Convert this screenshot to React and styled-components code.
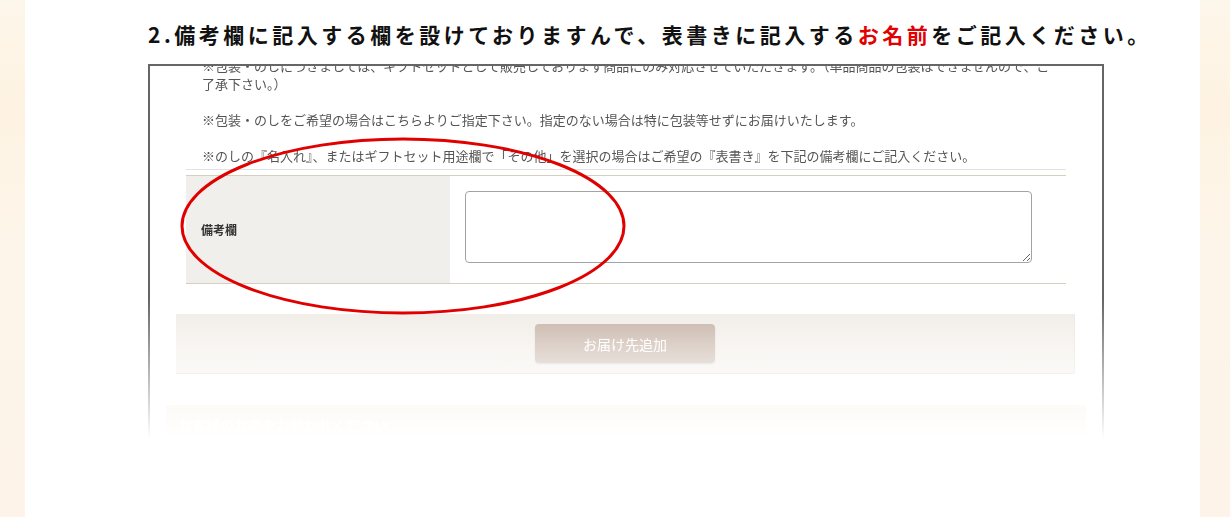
import React from "react"
import styled, { createGlobalStyle } from "styled-components"

const GlobalStyle = createGlobalStyle`
  html, body {
    margin: 0;
    padding: 0;
    background: #fff;
  }
  body {
    font-family: "Noto Sans CJK JP", "Noto Sans", sans-serif;
  }
`

const Page = styled.div`
  position: relative;
  display: flex;
  width: 1230px;
  height: 517px;
  overflow: hidden;
`

const Side = styled.div`
  width: ${p => p.$w}px;
  flex-shrink: 0;
  background: linear-gradient(180deg, #fdf6ea 0%, #fef3e2 20%, #fdf5ea 50%, #fdf3e8 100%);
`

const Main = styled.div`
  flex: 1;
  background: #fff;
  padding-left: 123px;
`

const Title = styled.h2`
  margin: 0;
  padding: 22px 0 0 0;
  height: 64px;
  box-sizing: border-box;
  font-family: "Noto Sans CJK JP", sans-serif;
  font-weight: 700;
  font-size: 21px;
  line-height: 24px;
  letter-spacing: 3.5px;
  color: #111;
  white-space: nowrap;
`

const Red = styled.span`
  color: #e20000;
`

const Frame = styled.div`
  width: 952px;
  height: 380px;
  border: 2px solid #666;
  border-bottom: none;
  overflow: hidden;
  -webkit-mask-image: linear-gradient(180deg, #000 0, #000 235px, transparent 375px);
  mask-image: linear-gradient(180deg, #000 0, #000 235px, transparent 375px);
`

const Notes = styled.div`
  margin: -9px 36px 0 36px;
  padding: 0 16px;
  font-size: 13px;
  line-height: 18px;
  color: #555;
  border-bottom: 1px solid #e2e2e2;
  padding-bottom: 4px;
`

const Note = styled.p`
  margin: 0 0 18px 0;
  white-space: nowrap;
  &:last-child {
    margin-bottom: 0;
  }
`

const Table = styled.div`
  display: grid;
  grid-template-columns: 264px 1fr;
  margin: 5px 36px 0 36px;
  border-top: 1px solid #d5cfbd;
  border-bottom: 1px solid #d5cfbd;
`

const Label = styled.div`
  display: flex;
  align-items: center;
  padding-left: 15px;
  background: #f1efeb;
  font-size: 12px;
  font-weight: 700;
  color: #333;
`

const Value = styled.div`
  padding: 15px 34px 20px 15px;
`

const Memo = styled.textarea`
  display: block;
  width: 567px;
  height: 72px;
  box-sizing: border-box;
  border: 1px solid #a3a3a3;
  border-radius: 4px;
  background: #fff;
  resize: vertical;
  font-family: inherit;
`

const ButtonArea = styled.div`
  display: flex;
  justify-content: center;
  align-items: flex-start;
  margin: 30px 27px 0 26px;
  height: 60px;
  box-sizing: border-box;
  padding-top: 10px;
  background: linear-gradient(180deg, #f0ebe6 0%, #f7f3ef 100%);
  border-bottom: 1px solid #e6e2de;
  border-right: 1px solid #ebe6e1;
`

const AddButton = styled.button`
  width: 180px;
  height: 39px;
  border: none;
  border-radius: 4px;
  background: linear-gradient(180deg, #c4b0a3 0%, #d3c3b9 100%);
  box-shadow: 0 1px 2px rgba(0, 0, 0, 0.12);
  color: #fff;
  font-family: "Noto Sans CJK JP", sans-serif;
  font-size: 14px;
`

const SectionHead = styled.div`
  margin: 31px 16px 0 16px;
  height: 40px;
  padding: 10px 12px;
  box-sizing: border-box;
  border-radius: 3px;
  background: #f7ece0;
  color: #fff;
  font-size: 14px;
  font-weight: 700;
`

const Circle = styled.svg`
  position: absolute;
  left: 180px;
  top: 137px;
  pointer-events: none;
`

export default function App() {
  return (
    <>
      <GlobalStyle />
      <Page>
        <Side $w={25} />
        <Main>
          <Title>
            2.備考欄に記入する欄を設けておりますんで、表書きに記入する<Red>お名前</Red>をご記入ください。
          </Title>
          <Frame>
            <Notes>
              <Note>
                ※包装・のしにつきましては、ギフトセットとして販売しております商品にのみ対応させていただきます。（単品商品の包装はできませんので、ご
                <br />
                了承下さい。）
              </Note>
              <Note>※包装・のしをご希望の場合はこちらよりご指定下さい。指定のない場合は特に包装等せずにお届けいたします。</Note>
              <Note>※のしの『名入れ』、またはギフトセット用途欄で「その他」を選択の場合はご希望の『表書き』を下記の備考欄にご記入ください。</Note>
            </Notes>
            <Table>
              <Label>備考欄</Label>
              <Value>
                <Memo />
              </Value>
            </Table>
            <ButtonArea>
              <AddButton type="button">お届け先追加</AddButton>
            </ButtonArea>
            <SectionHead>お客様のお声をお聞かせください</SectionHead>
          </Frame>
        </Main>
        <Side $w={30} />
        <Circle width="450" height="182" viewBox="0 0 450 182">
          <ellipse cx="223" cy="89" rx="221" ry="87" fill="none" stroke="#e00000" strokeWidth="3" />
        </Circle>
      </Page>
    </>
  )
}
